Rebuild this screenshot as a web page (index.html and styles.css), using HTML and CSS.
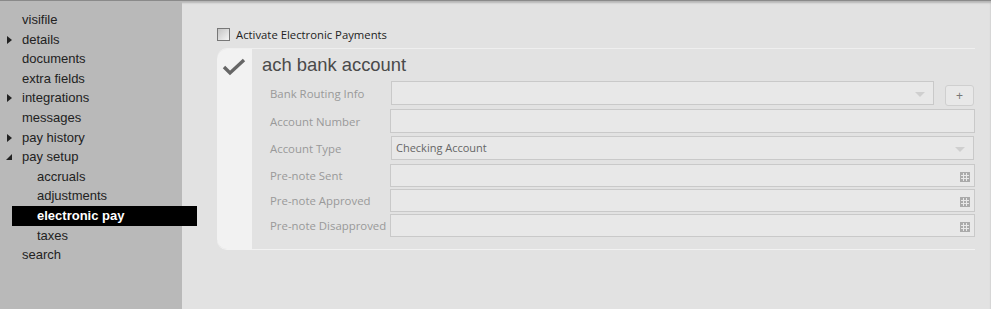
FILE: index.html
```html
<!DOCTYPE html>
<html lang="en">
<head>
    <meta charset="UTF-8">
    <title>Electronic Pay</title>
    <link rel="stylesheet" href="styles.css">
</head>
<body>
    <div class="page">
        <div class="sidebar">
            <ul class="nav">
                <li>visifile</li>
                <li class="closed">details</li>
                <li>documents</li>
                <li>extra fields</li>
                <li class="closed">integrations</li>
                <li>messages</li>
                <li class="closed">pay history</li>
                <li class="open">pay setup</li>
                <li class="sub">accruals</li>
                <li class="sub">adjustments</li>
                <li class="sub selected">electronic pay</li>
                <li class="sub">taxes</li>
                <li>search</li>
            </ul>
        </div>
        <div class="main">
            <label class="activate">
                <span class="checkbox"></span>
                Activate Electronic Payments
            </label>
            <div class="card">
                <div class="gutter">
                    <svg width="24" height="18" viewBox="0 0 24 18">
                        <polyline points="2,9 8,15 22,2" fill="none" stroke="#666" stroke-width="3.4"/>
                    </svg>
                </div>
                <div class="content">
                    <h2>ach bank account</h2>
                    <div class="form">
                        <div class="row r1">
                            <span class="label">Bank Routing Info</span>
                            <div class="field select short"><span class="arrow"></span></div>
                            <button class="plus">+</button>
                        </div>
                        <div class="row r2">
                            <span class="label">Account Number</span>
                            <div class="field"></div>
                        </div>
                        <div class="row r3">
                            <span class="label">Account Type</span>
                            <div class="field select">Checking Account<span class="arrow"></span></div>
                        </div>
                        <div class="row r4">
                            <span class="label">Pre-note Sent</span>
                            <div class="field date"><span class="cal"></span></div>
                        </div>
                        <div class="row r5">
                            <span class="label">Pre-note Approved</span>
                            <div class="field date"><span class="cal"></span></div>
                        </div>
                        <div class="row r6">
                            <span class="label">Pre-note Disapproved</span>
                            <div class="field date"><span class="cal"></span></div>
                        </div>
                    </div>
                </div>
            </div>
        </div>
    </div>
</body>
</html>
```

FILE: styles.css
```css
body {
    margin: 0;
    font-family: "Liberation Sans", Arial, sans-serif;
    background-color: #e2e2e2;
    overflow: hidden;
}
.page {
    display: flex;
    height: 309px;
    border-top: 1px solid #8a8a8a;
    box-shadow: inset 0 2px 2px rgba(0, 0, 0, 0.2);
    box-sizing: border-box;
}
.sidebar {
    width: 182px;
    flex: none;
    background: #b9b9b9;
    position: relative;
    z-index: 1;
}
.nav {
    list-style: none;
    margin: 0;
    padding: 9px 0 0 0;
}
.nav li {
    font-size: 13px;
    color: #222;
    height: 19.6px;
    line-height: 19.6px;
    padding-left: 22px;
    position: relative;
}
.nav li.sub {
    padding-left: 37px;
}
.nav li.closed::before {
    content: "";
    position: absolute;
    left: 7px;
    top: 6px;
    border-left: 5px solid #222;
    border-top: 4px solid transparent;
    border-bottom: 4px solid transparent;
}
.nav li.open::before {
    content: "";
    position: absolute;
    left: 6px;
    top: 7px;
    border-right: 6px solid #222;
    border-top: 6px solid transparent;
}
.nav li.selected {
    background: #000;
    color: #fff;
    font-weight: bold;
    margin-left: 12px;
    margin-right: -15px;
    padding-left: 25px;
}
.main {
    flex: 1;
    padding: 25px 16px 0 35px;
}
.activate {
    display: flex;
    align-items: center;
    font-family: "Open Sans", sans-serif;
    font-size: 11.3px;
    color: #222;
    height: 16px;
}
.checkbox {
    width: 11px;
    height: 11px;
    border: 1px solid #777;
    background: linear-gradient(135deg, #c4c4c4, #f4f4f4);
    margin-right: 6px;
}
.card {
    display: flex;
    margin-top: 6px;
    height: 202px;
    border-top: 1px solid #efefef;
    border-bottom: 1px solid #f2f2f2;
    border-radius: 10px 0 0 10px;
    box-sizing: border-box;
}
.gutter {
    width: 35px;
    background: #f2f2f2;
    border-radius: 10px 0 0 10px;
    padding: 9px 0 0 5px;
    box-sizing: border-box;
}
.content {
    flex: 1;
}
.content h2 {
    margin: 5px 0 0 10px;
    font-size: 18.4px;
    font-weight: normal;
    color: #4a4a4a;
    height: 25px;
    line-height: 22px;
}
.form {
    padding-left: 18px;
}
.row {
    display: flex;
    align-items: center;
}
.r1 { margin-top: 2px; height: 24px; }
.r2 { margin-top: 4px; height: 24px; }
.r3 { margin-top: 3px; height: 24px; }
.r4 { margin-top: 4px; height: 23px; }
.r5 { margin-top: 2px; height: 23px; }
.r6 { margin-top: 2px; height: 23px; }
.label {
    width: 120px;
    flex: none;
    font-family: "Open Sans", sans-serif;
    font-size: 11.4px;
    color: #999;
}
.field {
    flex: 1;
    align-self: stretch;
    background: #e8e8e8;
    border: 1px solid #c9c9c9;
    position: relative;
    font-family: "Open Sans", sans-serif;
    font-size: 11px;
    color: #666;
    padding-left: 4px;
    line-height: 22px;
}
.field.short {
    flex: none;
    width: 537px;
    margin-left: 1px;
}
.r3 .field {
    margin-left: 1px;
    margin-right: 1px;
}
.arrow {
    position: absolute;
    right: 8px;
    top: 10px;
    border-top: 5px solid #cfcfcf;
    border-left: 5px solid transparent;
    border-right: 5px solid transparent;
}
.cal {
    position: absolute;
    right: 4px;
    top: 7px;
    width: 8px;
    height: 8px;
    border: 1px solid #aaa;
    background:
        linear-gradient(90deg, transparent 2px, #e8e8e8 2px, #e8e8e8 3px, transparent 3px, transparent 5px, #e8e8e8 5px, #e8e8e8 6px, transparent 6px),
        linear-gradient(180deg, transparent 2px, #e8e8e8 2px, #e8e8e8 3px, transparent 3px, transparent 5px, #e8e8e8 5px, #e8e8e8 6px, transparent 6px),
        #aaa;
}
.plus {
    width: 29px;
    height: 21px;
    margin-left: 11px;
    border: 1px solid #cfcfcf;
    border-radius: 3px;
    background: #e8e8e8;
    color: #777;
    font-size: 12px;
    padding: 0;
    align-self: flex-end;
    margin-bottom: -1px;
}
```
